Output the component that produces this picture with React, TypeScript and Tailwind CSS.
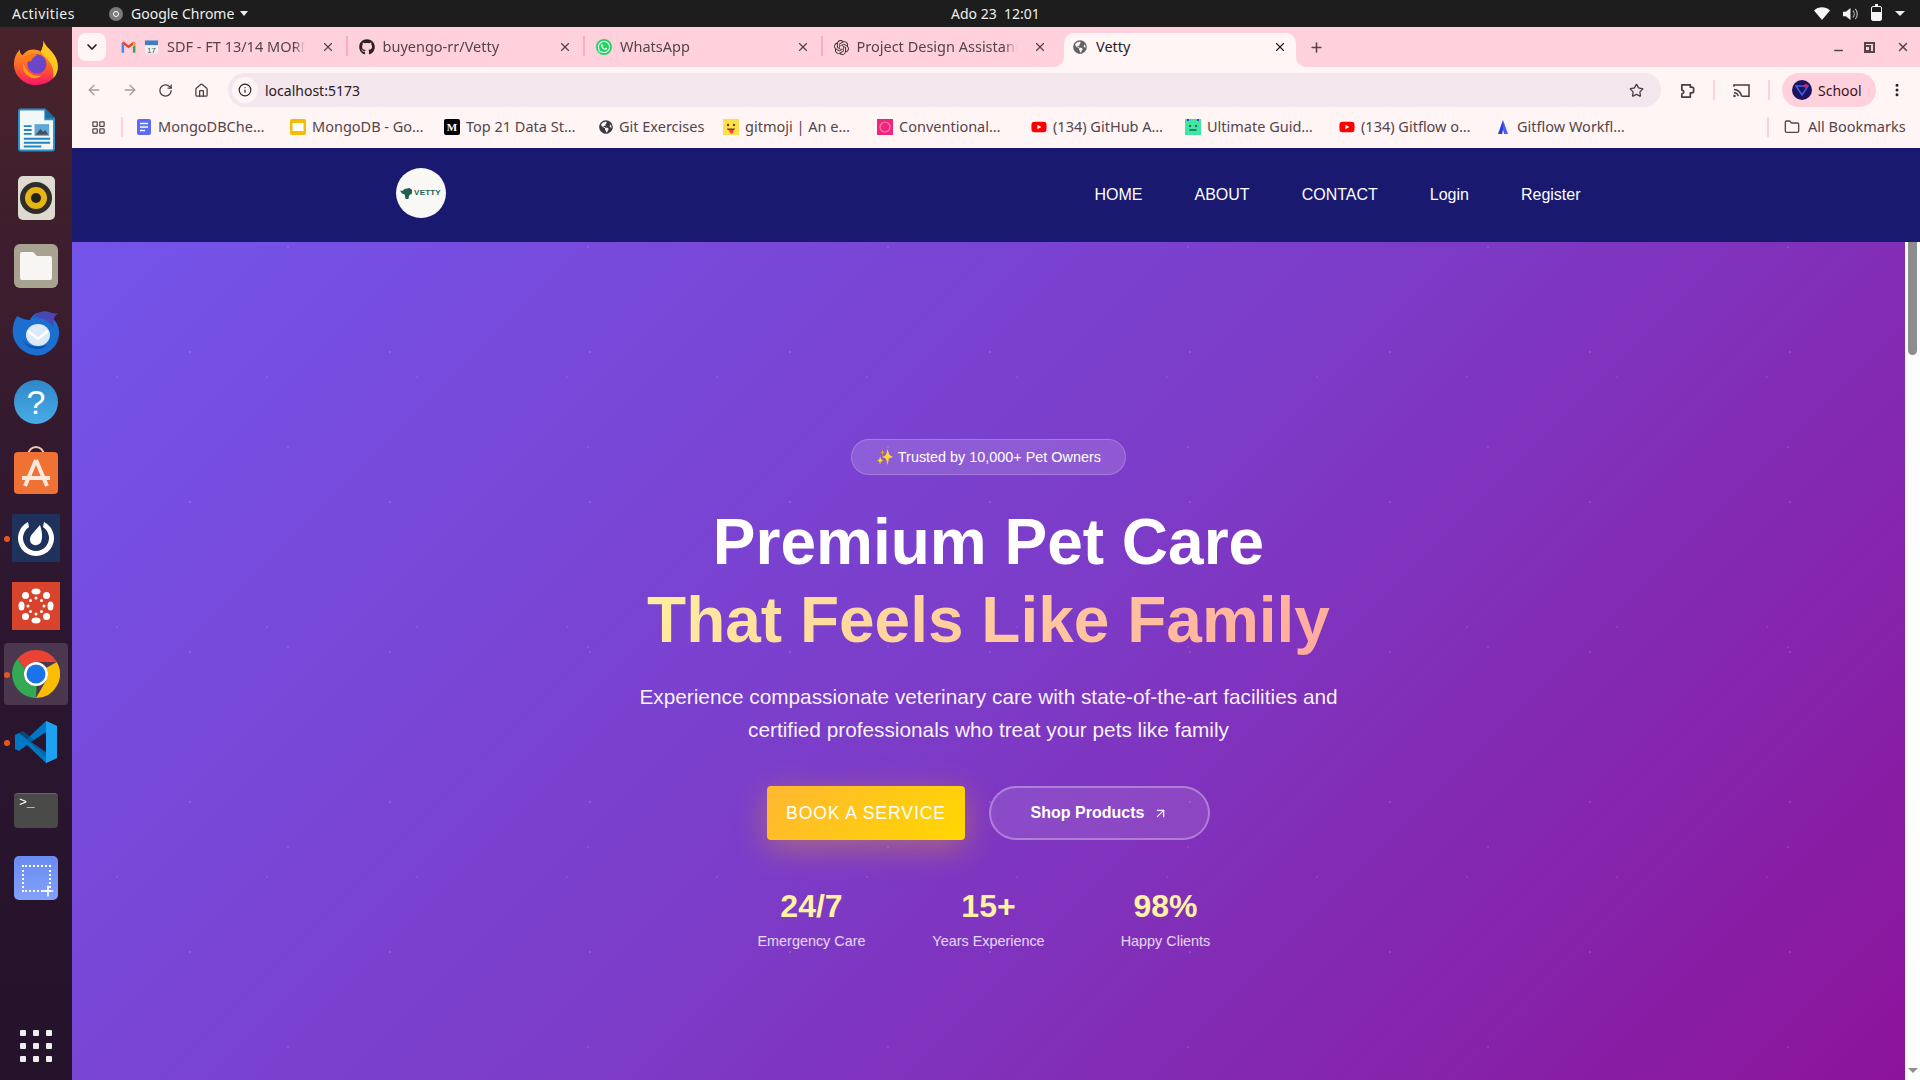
import React from 'react';
import {
  ArrowLeft,
  ArrowRight,
  ArrowUpRight,
  ChevronDown,
  Folder,
  Home,
  Info,
  LayoutGrid,
  Minus,
  MoreVertical,
  Plus,
  RotateCw,
  Star,
  X,
} from 'lucide-react';
import { FaGithub, FaGlobeAmericas, FaWhatsapp, FaYoutube } from 'react-icons/fa';
import { SiOpenai } from 'react-icons/si';

// Small favicons
const GmailIcon = () => (
  <svg viewBox="0 0 24 18" className="w-[15px] h-[12px] shrink-0">
    <path d="M1 18V3l4 3v12z" fill="#4285f4" />
    <path d="M19 18V6l4-3v15z" fill="#34a853" />
    <path d="M1 3l3-3 8 6 8-6 3 3-11 8z" fill="#ea4335" />
    <path d="M19 1l4 2v3l-4 3z" fill="#fbbc04" />
  </svg>
);

const CalendarIcon = () => (
  <svg viewBox="0 0 16 16" className="w-[15px] h-[16px] shrink-0">
    <rect x="1" y="1" width="14" height="14" rx="1" fill="#eef1f4" />
    <rect x="1" y="1" width="14" height="5" fill="#3f7cc4" />
    <text x="8" y="14" textAnchor="middle" fontSize="8" fill="#4b5257" fontFamily="Liberation Sans, sans-serif">17</text>
  </svg>
);

const DocIcon = () => (
  <svg viewBox="0 0 16 16" className="w-4 h-4 shrink-0">
    <rect x="1" width="14" height="16" rx="2" fill="#5b6cf0" />
    <path d="M4 4.5h8M4 8h8M4 11.5h5" stroke="#fff" strokeWidth="1.4" />
  </svg>
);

const SlideIcon = () => (
  <svg viewBox="0 0 16 16" className="w-4 h-4 shrink-0">
    <rect width="16" height="16" rx="2" fill="#f6bb04" />
    <rect x="2.5" y="4" width="11" height="8" fill="#fff" />
  </svg>
);

const MediumIcon = () => (
  <span className="w-4 h-4 shrink-0 bg-black text-white text-[11px] leading-4 font-bold text-center overflow-hidden rounded-[2px] font-['Liberation_Serif',serif]">
    M
  </span>
);

const GitmojiIcon = () => (
  <svg viewBox="0 0 16 16" className="w-4 h-4 shrink-0">
    <rect width="16" height="16" fill="#fde047" />
    <circle cx="5" cy="6" r="1.2" fill="#5b4513" />
    <circle cx="11" cy="6" r="1.2" fill="#5b4513" />
    <path d="M4 9.5h8c0 3-8 3-8 0z" fill="#7a3d13" />
    <rect x="6.5" y="10.5" width="4" height="4" rx="2" fill="#ef4444" />
  </svg>
);

const ConventionalIcon = () => (
  <svg viewBox="0 0 16 16" className="w-4 h-4 shrink-0">
    <rect width="16" height="16" fill="#f0257a" />
    <circle cx="8" cy="8" r="5" fill="none" stroke="#f97fae" strokeWidth="1.2" />
  </svg>
);

const YoutubeIcon = () => <FaYoutube className="w-4 h-4 shrink-0 text-[#f00]" />;

const UltimateIcon = () => (
  <svg viewBox="0 0 16 16" className="w-4 h-4 shrink-0">
    <rect width="16" height="16" fill="#3ee6a0" />
    <rect x="2" width="2" height="2" fill="#4338ca" />
    <rect x="12" width="2" height="2" fill="#4338ca" />
    <circle cx="5" cy="7" r="1" fill="#1e3a5f" />
    <circle cx="11" cy="7" r="1" fill="#1e3a5f" />
    <path d="M4.5 11h7" stroke="#1e3a5f" strokeWidth="1.2" />
  </svg>
);

const AtlassianIcon = () => (
  <svg viewBox="0 0 16 16" className="w-4 h-4 shrink-0">
    <path d="M8 1l5 14H9L7.5 8z" fill="#4f5df5" />
    <path d="M8 1L3 15h4l1-4z" fill="#2b3be0" />
  </svg>
);

const GlobeDark = () => <FaGlobeAmericas className="w-[14px] h-[14px] shrink-0 text-[#3c3a40]" />;

// Dock icons
const FirefoxIcon = () => (
  <svg viewBox="0 0 48 48" className="w-[46px] h-[46px]">
    <defs>
      <linearGradient id="ffBody" x1="0.5" y1="0.2" x2="0.5" y2="1">
        <stop offset="0" stopColor="#ff9a1f" />
        <stop offset="0.55" stopColor="#ff5a2c" />
        <stop offset="1" stopColor="#f5156c" />
      </linearGradient>
    </defs>
    <path d="M32 1c0 5 5 8 9 13 5 6 7 13 5 20-3 9-12 14-22 14C11 48 1 38 1 26c0-5 2-11 6-15 0 3 1 5 3 6 2-3 6-6 11-6 3 0 6 1 8 2 2-3 3-8 3-12z" fill="url(#ffBody)" />
    <path d="M32 1c0 5 5 8 9 13 5 6 7 13 5 20-1 3-2 5-4 7 1-8-1-15-6-20-3-3-6-5-7-8 2-3 3-8 3-12z" fill="#ffc81f" />
    <circle cx="25" cy="26" r="10" fill="#6d45c9" />
    <path d="M10 20c4-4 10-5 15-3-3 1-5 3-6 6-3 1-7 0-9-3z" fill="#ff7a12" />
    <path d="M11 25c2 8 9 15 19 13-6 5-14 3-18-3-2-3-2-7-1-10z" fill="#ff9a1f" />
  </svg>
);

const WriterIcon = () => (
  <svg viewBox="0 0 38 44" className="w-[37px] h-[44px]">
    <path d="M3 0h25l10 10v31a3 3 0 01-3 3H3a3 3 0 01-3-3V3a3 3 0 013-3z" fill="#2a8fc4" />
    <path d="M3 2h24v10h9v29a1 1 0 01-1 1H3a1 1 0 01-1-1V3a1 1 0 011-1z" fill="#f4f7f8" />
    <path d="M28 0l10 10H28z" fill="#1c6e9e" />
    <path d="M6 18h8M6 22h8M6 26h8M6 31h27M6 35h27M6 39h18" stroke="#1f86c1" strokeWidth="2" />
    <rect x="17" y="16" width="15" height="12" fill="#5fa7d4" />
    <path d="M18 27l5-6 3 3 2-2 3 5z" fill="#4b4f54" />
  </svg>
);

const RhythmboxIcon = () => (
  <div className="w-[37px] h-[44px] rounded-[5px] bg-[#dedad0] flex items-center justify-center">
    <svg viewBox="0 0 32 32" className="w-8 h-8">
      <circle cx="16" cy="16" r="16" fill="#2e2d2c" />
      <circle cx="16" cy="16" r="11" fill="#e7b512" />
      <circle cx="16" cy="16" r="5" fill="#23221f" />
    </svg>
  </div>
);

const FilesIcon = () => (
  <div className="w-[44px] h-[44px] rounded-[6px] bg-[#a8a290] flex items-center justify-center">
    <svg viewBox="0 0 32 28" className="w-8 h-7">
      <path d="M2 0h11l4 4h13a2 2 0 012 2v20a2 2 0 01-2 2H2a2 2 0 01-2-2V2a2 2 0 012-2z" fill="#f7f6f3" />
    </svg>
  </div>
);

const ThunderbirdIcon = () => (
  <svg viewBox="0 0 48 46" className="w-[48px] h-[46px]">
    <path d="M5 5c-5 8-6 19-1 27 5 9 16 14 26 12 9-3 16-10 17-20 1-8-3-15-9-19-5-3-9-4-13-3-3 1-6 4-7 7-5 0-9-2-13-4z" fill="#1a6fd0" />
    <path d="M22 6c3-5 10-7 15-5 3 1 6 2 9 1-2 2-4 4-4 6-1 3 0 5-1 8-3-5-9-9-19-10z" fill="#4a47b4" />
    <ellipse cx="26" cy="24" rx="12" ry="11" fill="#dbe9f8" />
    <path d="M16 20l10 8 10-8" fill="none" stroke="#ffffff" strokeWidth="2.5" />
    <path d="M10 28c5 8 16 10 25 6-6 6-19 6-25-6z" fill="#0d4fa4" />
  </svg>
);

const HelpIcon = () => (
  <div className="w-11 h-11 rounded-full bg-[linear-gradient(180deg,#2f87c9,#48ace6)] text-white text-[34px] leading-[44px] text-center font-['Liberation_Sans',sans-serif]">
    ?
  </div>
);

const AppStoreIcon = () => (
  <svg viewBox="0 0 44 48" className="w-[44px] h-[48px]">
    <path d="M14 10c0-12 16-12 16 0" fill="none" stroke="#e9c9ad" strokeWidth="2" />
    <rect y="6" width="44" height="42" rx="4" fill="#ef7234" />
    <path d="M22 14L11 40M22 14l11 26M8 32h28" stroke="#fce8dd" strokeWidth="4" fill="none" />
  </svg>
);

const MattermostIcon = () => (
  <div className="w-12 h-12 bg-[#1e325c] flex items-center justify-center">
    <svg viewBox="0 0 40 40" className="w-10 h-10">
      <path d="M28 4a18 18 0 11-16 0l1 5a13 13 0 1014 0z" fill="#fff" />
      <path d="M24 7c2 6 3 12 1 17-2 4-8 4-10 1-2-3-1-7 2-10z" fill="#fff" />
    </svg>
  </div>
);

const CanvasIcon = () => (
  <div className="w-12 h-12 bg-[#d8432b] flex items-center justify-center">
    <svg viewBox="0 0 40 40" className="w-10 h-10" fill="#fff">
      <ellipse cx="20" cy="5.5" rx="4.5" ry="3" />
      <ellipse cx="20" cy="34.5" rx="4.5" ry="3" />
      <ellipse cx="5.5" cy="20" rx="3" ry="4.5" />
      <ellipse cx="34.5" cy="20" rx="3" ry="4.5" />
      <ellipse cx="9.5" cy="9.5" rx="3.5" ry="3.5" />
      <ellipse cx="30.5" cy="9.5" rx="3.5" ry="3.5" />
      <ellipse cx="9.5" cy="30.5" rx="3.5" ry="3.5" />
      <ellipse cx="30.5" cy="30.5" rx="3.5" ry="3.5" />
      <circle cx="20" cy="12" r="1.5" />
      <circle cx="20" cy="28" r="1.5" />
      <circle cx="12" cy="20" r="1.5" />
      <circle cx="28" cy="20" r="1.5" />
      <circle cx="14.5" cy="14.5" r="1.5" />
      <circle cx="25.5" cy="14.5" r="1.5" />
      <circle cx="14.5" cy="25.5" r="1.5" />
      <circle cx="25.5" cy="25.5" r="1.5" />
    </svg>
  </div>
);

const ChromeIcon = () => (
  <svg viewBox="0 0 48 48" className="w-12 h-12">
    <path d="M24 0a24 24 0 0120.8 12H24a12 12 0 00-11 7L5.5 8.8A24 24 0 0124 0z" fill="#ea4335" />
    <path d="M44.8 12A24 24 0 0124 48l10.4-18A12 12 0 0034 18z" fill="#fbbc04" transform="translate(0 0)" />
    <path d="M5.5 8.8L13 19a12 12 0 0011 17h.5L24 48A24 24 0 015.5 8.8z" fill="#34a853" />
    <circle cx="24" cy="24" r="12" fill="#fff" />
    <circle cx="24" cy="24" r="9.5" fill="#1a73e8" />
  </svg>
);

const VSCodeIcon = () => (
  <svg viewBox="0 0 44 42" className="w-[44px] h-[42px]">
    <path d="M32 0l11 5v32l-11 5-19-18-8 6-4-2v-14l4-2 8 6z" fill="#0078c4" />
    <path d="M32 0l11 5v32l-11 5z" fill="#1ea1f1" />
    <path d="M5 12l27 24v-8L9 10z" fill="#005a96" opacity="0.7" />
    <path d="M32 11L17 21l15 10z" fill="#2a1530" />
  </svg>
);

const TerminalIcon = () => (
  <div className="w-11 h-[35px] rounded-[4px] bg-[#4a4a48] text-white text-[13px] leading-[14px] pl-[5px] pt-[2px] font-['Liberation_Mono',monospace] border-t border-[#666]">
    {'>_'}
  </div>
);

const ScreenshotIcon = () => (
  <div className="relative w-11 h-11 rounded-[5px] bg-[linear-gradient(180deg,#6a8cf0,#83a0fb)] flex items-center justify-center">
    <div className="w-[29px] h-[27px] border-[2px] border-dotted border-white" />
    <Plus className="absolute right-[2px] bottom-[1px] w-4 h-4 text-white" strokeWidth={2.5} />
  </div>
);

const AppGrid = () => (
  <div className="grid grid-cols-3 gap-x-[7px] gap-y-[7px]">
    {Array.from({ length: 9 }).map((_, i) => (
      <span key={i} className="w-[6px] h-[6px] rounded-[1px] bg-[#efeeee]" />
    ))}
  </div>
);

const dockItems: { id: string; icon: React.ReactNode; running?: boolean; active?: boolean }[] = [
  { id: 'firefox', icon: <FirefoxIcon /> },
  { id: 'writer', icon: <WriterIcon /> },
  { id: 'rhythmbox', icon: <RhythmboxIcon /> },
  { id: 'files', icon: <FilesIcon /> },
  { id: 'thunderbird', icon: <ThunderbirdIcon /> },
  { id: 'help', icon: <HelpIcon /> },
  { id: 'appstore', icon: <AppStoreIcon /> },
  { id: 'mattermost', icon: <MattermostIcon />, running: true },
  { id: 'canvas', icon: <CanvasIcon /> },
  { id: 'chrome', icon: <ChromeIcon />, running: true, active: true },
  { id: 'vscode', icon: <VSCodeIcon />, running: true },
  { id: 'terminal', icon: <TerminalIcon /> },
  { id: 'screenshot', icon: <ScreenshotIcon /> },
];

const Dock: React.FC = () => (
  <aside className="w-[72px] shrink-0 flex flex-col pt-px bg-[linear-gradient(180deg,#49232b,#2e1730_50%,#24122b)]">
    {dockItems.map(item => (
      <div key={item.id} className="relative h-[68px] flex items-center justify-center">
        {item.active && <div className="absolute left-[4px] right-[4px] top-[3px] bottom-[3px] rounded-[4px] bg-white/15" />}
        {item.running && <span className="absolute left-[4px] top-[32px] w-[6px] h-[6px] rounded-full bg-[#e95420]" />}
        <div className="relative">{item.icon}</div>
      </div>
    ))}
    <div className="mt-auto mb-[18px] flex justify-center">
      <AppGrid />
    </div>
  </aside>
);

const TopBar: React.FC = () => (
  <header className="relative h-[27px] shrink-0 bg-[#1d1d1d] text-[#eeeeec] text-[14px] flex items-center pl-[12px] pr-[15px] font-['Noto_Sans',sans-serif]">
    <span className="w-[97px] tracking-[0.45px]">Activities</span>
    <span className="w-[14px] h-[14px] rounded-full bg-[#7a7a7a] flex items-center justify-center mr-2">
      <span className="w-[6px] h-[6px] rounded-full border border-white" />
    </span>
    <span>Google Chrome</span>
    <span className="ml-[6px] w-0 h-0 border-x-[4px] border-x-transparent border-t-[5px] border-t-[#eeeeec]" />
    <span className="absolute left-[951px]">Ado 23&nbsp;&nbsp;12:01</span>
    <div className="ml-auto flex items-center gap-[13px]">
      <svg viewBox="0 0 16 13" className="w-4 h-[13px]">
        <path d="M0 3.5C4.5-.7 11.5-.7 16 3.5L8 13z" fill="#f5f5f5" />
      </svg>
      <svg viewBox="0 0 16 14" className="w-[15px] h-[14px]">
        <path d="M0 4.5h3L8 .5v13l-5-4H0z" fill="#f5f5f5" />
        <path d="M10.5 3.5c2 2 2 5 0 7M13 1.5c3 3 3 8 0 11" stroke="#bbb" fill="none" strokeWidth="1.2" />
      </svg>
      <div className="relative w-[11px] h-[15px] rounded-[2px] border border-[#f5f5f5] flex items-end">
        <span className="absolute -top-[3px] left-[3px] w-[3px] h-[2px] bg-[#f5f5f5]" />
        <span className="w-full h-[8px] bg-[#f5f5f5]" />
      </div>
      <span className="w-0 h-0 border-x-[5px] border-x-transparent border-t-[5px] border-t-[#eeeeec]" />
    </div>
  </header>
);

const tabs: { id: string; title: string; icon: React.ReactNode }[] = [
  {
    id: 'gmail',
    title: 'SDF - FT 13/14 MORN',
    icon: (
      <>
        <GmailIcon />
        <CalendarIcon />
      </>
    ),
  },
  { id: 'github', title: 'buyengo-rr/Vetty', icon: <FaGithub className="w-4 h-4 shrink-0 text-[#2a2026]" /> },
  { id: 'whatsapp', title: 'WhatsApp', icon: <FaWhatsapp className="w-4 h-4 shrink-0 text-white bg-[#25d366] rounded-full p-[1px]" /> },
  { id: 'chatgpt', title: 'Project Design Assistanc', icon: <SiOpenai className="w-[15px] h-[15px] shrink-0 text-[#3a3036]" /> },
];

const TabStrip: React.FC = () => (
  <div className="relative h-[40px] shrink-0 bg-[#ffd1dc] flex items-end pl-[6px] font-['Noto_Sans',sans-serif]">
    <div className="mb-[6px] w-[28px] h-[28px] rounded-[8px] bg-[#fff5f5] flex items-center justify-center">
      <ChevronDown className="w-4 h-4 text-[#2a1a20]" strokeWidth={2.5} />
    </div>
    <div className="ml-[4px] flex h-[34px] pb-[6px]">
      {tabs.map((tab, i) => (
        <div key={tab.id} className="relative w-[237.5px] flex items-center pl-[11px] pr-[13px] gap-[8px] text-[14.5px] text-[#54444b]">
          {tab.icon}
          <span className="min-w-0 flex-1 whitespace-nowrap [mask-image:linear-gradient(90deg,#000_92%,transparent)]">
            {tab.title}
          </span>
          <X className="w-[14px] h-[14px] shrink-0 ml-2 text-[#54444b]" strokeWidth={2} />
          {i < 3 && <span className="absolute right-0 top-[3px] h-[20px] w-[2px] bg-[#f8aebf]" />}
        </div>
      ))}
    </div>
    <div className="relative w-[232px] h-[34px] ml-[4px] pb-[6px] rounded-t-[10px] bg-[#fff5f4] flex items-center pl-[9px] pr-[9px] gap-[9px] text-[14.5px] text-[#2a2026]">
      <span className="absolute -left-[10px] bottom-0 w-[10px] h-[10px] bg-[#fff5f4]">
        <span className="block w-full h-full rounded-br-[10px] bg-[#ffd1dc]" />
      </span>
      <span className="absolute -right-[10px] bottom-0 w-[10px] h-[10px] bg-[#fff5f4]">
        <span className="block w-full h-full rounded-bl-[10px] bg-[#ffd1dc]" />
      </span>
      <FaGlobeAmericas className="w-[14px] h-[14px] text-[#5f6368]" />
      <span className="flex-1">Vetty</span>
      <X className="w-[14px] h-[14px] text-[#2a2026]" strokeWidth={2} />
    </div>
    <Plus className="ml-[13px] mb-[12px] w-[15px] h-[15px] text-[#54444b]" strokeWidth={2.5} />
    <div className="ml-auto mb-[13px] mr-[10px] flex items-center gap-[19px] text-[#54444b]">
      <Minus className="w-[13px] h-[13px] translate-y-[3px]" strokeWidth={2.5} />
      <div className="relative w-[11px] h-[11px] border-[2px] border-[#54444b] mr-[2px]">
        <span className="absolute -left-[2px] top-[1px] w-[7px] h-[7px] border-[2px] border-[#54444b] bg-[#ffd1dc]" />
      </div>
      <X className="w-[14px] h-[14px]" strokeWidth={2.5} />
    </div>
  </div>
);

const ExtensionIcon = () => (
  <svg viewBox="0 0 18 18" className="ml-[18px] w-[17px] h-[17px]" fill="none" stroke="#4a3a40" strokeWidth="1.8" strokeLinejoin="round">
    <path d="M3 3h9v2.5h1.5a2 2 0 012 2v2a2 2 0 01-2 2H12V16H3v-3.5a2 2 0 000-4z" />
  </svg>
);

const Toolbar: React.FC = () => (
  <div className="h-[46px] shrink-0 bg-[#fff5f4] flex items-center pl-[14px] pr-[14px] text-[#4a3a40] font-['Noto_Sans',sans-serif]">
    <ArrowLeft className="w-4 h-4 text-[#a59a9e]" />
    <ArrowRight className="ml-[20px] w-4 h-4 text-[#a59a9e]" />
    <RotateCw className="ml-[20px] w-[15px] h-[15px]" strokeWidth={2} />
    <Home className="ml-[21px] w-[15px] h-[15px]" strokeWidth={2} />
    <div className="ml-[19px] w-[1433px] h-[34px] rounded-full bg-[#f3e6ec] flex items-center pr-[17px]">
      <div className="w-[26px] h-[26px] ml-[4px] rounded-full bg-[#fff5f4] flex items-center justify-center">
        <Info className="w-[14px] h-[14px] text-[#2a2026]" strokeWidth={2} />
      </div>
      <span className="ml-[7px] text-[14px] text-[#2a2026]">localhost:5173</span>
      <Star className="ml-auto w-[15px] h-[15px]" strokeWidth={2} />
    </div>
    <ExtensionIcon />
    <span className="ml-[17px] w-[2px] h-[20px] bg-[#ffd1dc]" />
    <svg viewBox="0 0 18 16" className="ml-[18px] w-[17px] h-[15px]" fill="none" stroke="#4a3a40" strokeWidth="1.6">
      <path d="M1 4V2h16v12H9" />
      <path d="M1 7a8 8 0 018 7M1 10.5a4.5 4.5 0 014.5 3.5" />
      <circle cx="1.5" cy="13.8" r="0.6" fill="#4a3a40" />
    </svg>
    <span className="ml-[18px] w-[2px] h-[20px] bg-[#ffd1dc]" />
    <div className="ml-[12px] w-[94px] h-[34px] rounded-full bg-[#ffd1dc] flex items-center pl-[10px] gap-[6px]">
      <svg viewBox="0 0 20 20" className="w-5 h-5">
        <circle cx="10" cy="10" r="10" fill="#1c1460" />
        <path d="M4 6l6 9 6-9z" fill="none" stroke="#3e62e0" strokeWidth="1.5" />
        <circle cx="14" cy="6" r="2" fill="#d3246e" />
      </svg>
      <span className="text-[14px] text-[#3a1220]">School</span>
    </div>
    <MoreVertical className="ml-[13px] w-4 h-4 text-[#2a2026]" strokeWidth={2.5} />
  </div>
);

const bookmarks: { id: string; label: string; icon: React.ReactNode; width: string }[] = [
  { id: 'b1', label: 'MongoDBChe…', icon: <DocIcon />, width: 'w-[154px]' },
  { id: 'b2', label: 'MongoDB - Go…', icon: <SlideIcon />, width: 'w-[154px]' },
  { id: 'b3', label: 'Top 21 Data St…', icon: <MediumIcon />, width: 'w-[155px]' },
  { id: 'b4', label: 'Git Exercises', icon: <GlobeDark />, width: 'w-[124px]' },
  { id: 'b5', label: 'gitmoji | An e…', icon: <GitmojiIcon />, width: 'w-[154px]' },
  { id: 'b6', label: 'Conventional…', icon: <ConventionalIcon />, width: 'w-[154px]' },
  { id: 'b7', label: '(134) GitHub A…', icon: <YoutubeIcon />, width: 'w-[154px]' },
  { id: 'b8', label: 'Ultimate Guid…', icon: <UltimateIcon />, width: 'w-[154px]' },
  { id: 'b9', label: '(134) Gitflow o…', icon: <YoutubeIcon />, width: 'w-[156px]' },
  { id: 'b10', label: 'Gitflow Workfl…', icon: <AtlassianIcon />, width: 'w-[200px]' },
];

const BookmarksBar: React.FC = () => (
  <div className="h-[34px] shrink-0 bg-[#fff5f4] flex items-center pl-[19px] pb-[6px] text-[14.5px] text-[#54444b] whitespace-nowrap font-['Noto_Sans',sans-serif]">
    <LayoutGrid className="w-[15px] h-[15px]" strokeWidth={2} />
    <span className="ml-[15px] w-[2px] h-[20px] bg-[#ffd1dc]" />
    <div className="ml-[13px] flex items-center">
      {bookmarks.map(mark => (
        <div key={mark.id} className={`flex items-center gap-[6px] ${mark.width}`}>
          {mark.icon}
          <span>{mark.label}</span>
        </div>
      ))}
    </div>
    <span className="ml-[72px] w-[2px] h-[20px] bg-[#ffd1dc]" />
    <Folder className="ml-[15px] w-4 h-4" strokeWidth={2} />
    <span className="ml-[8px]">All Bookmarks</span>
  </div>
);

const VettyLogo = () => (
  <div className="w-[50px] h-[50px] rounded-full bg-[#f9f8f4] flex items-center justify-center gap-[1px]">
    <svg viewBox="0 0 14 12" className="w-[13px] h-[11px]">
      <path d="M0 3h3l2-2 5-1 3 2v4l-3 2-1 4H6L5 7 2 6z" fill="#1f5f57" />
    </svg>
    <span className="text-[8px] font-bold leading-none text-[#1f5f57] tracking-[0.2px] font-['Liberation_Sans',sans-serif]">VETTY</span>
  </div>
);

const navLinks = ['HOME', 'ABOUT', 'CONTACT', 'Login', 'Register'];

const Navbar: React.FC = () => (
  <nav className="h-[94px] shrink-0 bg-[#191970] pr-[15px] pb-[2px] flex items-center font-['Liberation_Sans',sans-serif]">
    <div className="w-[1184px] mx-auto flex items-center justify-between pt-[2px]">
      <div className="-mt-[4px] -ml-[1px]">
        <VettyLogo />
      </div>
      <ul className="flex items-center gap-[52px] text-[16px] text-white">
        {navLinks.map(link => (
          <li key={link}>{link}</li>
        ))}
      </ul>
    </div>
  </nav>
);

const stats = [
  { value: '24/7', label: 'Emergency Care' },
  { value: '15+', label: 'Years Experience' },
  { value: '98%', label: 'Happy Clients' },
];

const Hero: React.FC = () => (
  <section className="relative flex-1 min-w-0 overflow-hidden bg-[linear-gradient(135deg,#7454ea_0%,#7c3cc8_50%,#8c149a_100%)] font-['Liberation_Sans',sans-serif]">
    {/* faint dot texture */}
    <div className="absolute inset-0 bg-[radial-gradient(circle,rgba(255,255,255,0.14)_1px,transparent_1.5px),radial-gradient(circle,rgba(255,255,255,0.1)_1px,transparent_1.5px),radial-gradient(circle,rgba(255,255,255,0.08)_1px,transparent_1.5px)] bg-[size:200px_150px,300px_200px,150px_250px] bg-[position:18px_35px,66px_105px,120px_10px]" />
    <div className="relative flex flex-col items-center pt-[197px] text-white">
      <div className="h-[36px] w-[275px] pt-[1px] rounded-full border border-white/20 bg-white/15 flex items-center justify-center text-[14.4px]">
        ✨ Trusted by 10,000+ Pet Owners
      </div>
      <h1 className="mt-[28px] text-center text-[64px] leading-[78.4px] font-bold">
        Premium Pet Care
        <br />
        <span className="bg-[linear-gradient(135deg,#ffef9e,#ffa99f)] bg-clip-text text-transparent">That Feels Like Family</span>
      </h1>
      <p className="mt-[20px] text-center text-[20.8px] leading-[33.3px] text-white/95">
        Experience compassionate veterinary care with state-of-the-art facilities and
        <br />
        certified professionals who treat your pets like family
      </p>
      <div className="mt-[40px] flex items-center gap-[24px]">
        <button className="w-[198px] h-[54px] rounded-[4px] bg-[linear-gradient(135deg,#ffb732,#ffd700)] text-[17.6px] tracking-[0.9px] text-white shadow-[0_8px_32px_rgba(255,193,7,0.35)]">
          BOOK A SERVICE
        </button>
        <button className="w-[221px] h-[54px] rounded-full border-2 border-white/30 bg-white/10 flex items-center justify-center gap-[9px] text-[16px] font-bold text-white">
          Shop Products
          <ArrowUpRight className="w-[15px] h-[15px]" strokeWidth={2} />
        </button>
      </div>
      <div className="mt-[46px] w-[531px] grid grid-cols-3 text-center">
        {stats.map(stat => (
          <div key={stat.label}>
            <div className="text-[32px] leading-[40px] font-bold text-[#fff3a3]">{stat.value}</div>
            <div className="mt-[4px] text-[14.4px] leading-[22px] text-white/80">{stat.label}</div>
          </div>
        ))}
      </div>
    </div>
  </section>
);

const Scrollbar: React.FC = () => (
  <div className="w-[15px] shrink-0 bg-[#fdfdfd] flex flex-col items-center">
    <div className="w-[9px] h-[113px] rounded-b-[5px] bg-[#8d8d8d]" />
    <span className="mt-auto mb-[7px] w-0 h-0 border-x-[5px] border-x-transparent border-t-[5px] border-t-[#8d8d8d]" />
  </div>
);

const App: React.FC = () => (
  <div className="w-[1920px] h-[1080px] overflow-hidden flex flex-col">
    <TopBar />
    <div className="flex-1 min-h-0 flex">
      <Dock />
      <main className="flex-1 min-w-0 flex flex-col">
        <TabStrip />
        <Toolbar />
        <BookmarksBar />
        <div className="h-px shrink-0 bg-[#fff5f4]" />
        <Navbar />
        <div className="flex-1 min-h-0 flex">
          <Hero />
          <Scrollbar />
        </div>
      </main>
    </div>
  </div>
);

export default App;
